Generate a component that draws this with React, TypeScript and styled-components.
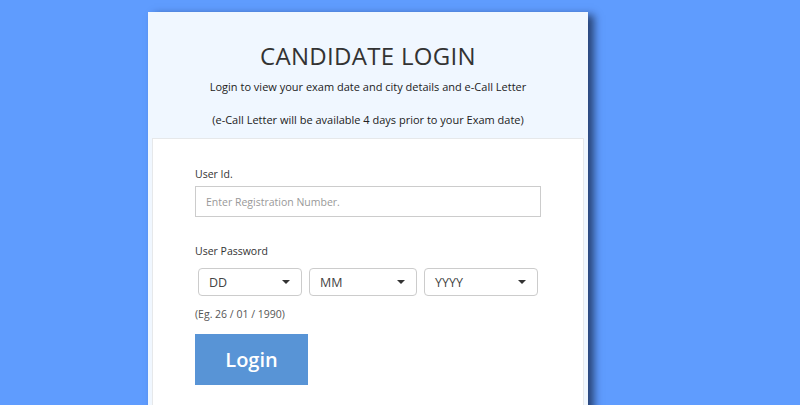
import styled, { createGlobalStyle } from "styled-components";

const GlobalStyle = createGlobalStyle`
  html, body {
    margin: 0;
    padding: 0;
    background: #5f9cfe;
    font-family: "Open Sans", "Liberation Sans", sans-serif;
  }
  * { box-sizing: border-box; }
`;

const Page = styled.div`
  width: 800px;
  height: 405px;
  overflow: hidden;
  padding: 12px 0 0 148px;
`;

const Card = styled.div`
  width: 440px;
  height: 420px;
  background: #f0f7ff;
  padding: 0 4px;
  box-shadow: 6px 3px 8px rgba(10, 20, 45, 0.65);
`;

const Header = styled.div`
  text-align: center;
  padding-top: 28px;
  height: 126px;
  color: #333;
`;

const Title = styled.h1`
  margin: 0 0 6px;
  font-size: 24px;
  font-weight: 400;
  line-height: 32px;
  letter-spacing: 0.3px;
`;

const Sub = styled.p`
  margin: 0 0 16px;
  font-size: 11px;
  line-height: 17px;
  font-weight: 500;
  color: #222;
`;

const Panel = styled.div`
  background: #fff;
  border: 1px solid #e6e8ea;
  border-bottom: none;
  height: 300px;
  padding: 27px 42px 0;
`;

const Label = styled.div`
  font-size: 10.5px;
  color: #333;
  line-height: 16px;
  margin-bottom: 4px;
`;

const Input = styled.input`
  display: block;
  width: 346px;
  height: 31px;
  border: 1px solid #ccc;
  padding: 0 10px;
  font-family: inherit;
  font-size: 10.5px;
  color: #333;
  margin-bottom: 26px;
  outline: none;
  &::placeholder { color: #999; }
`;

const SelectRow = styled.div`
  display: flex;
  gap: 7px;
  padding-left: 3px;
  margin-top: 9px;
`;

const Select = styled.div<{ w: number }>`
  width: ${({ w }) => w}px;
  height: 28px;
  border: 1px solid #ccc;
  border-radius: 4px;
  display: flex;
  align-items: center;
  justify-content: space-between;
  padding: 0 11px 0 10px;
  font-size: 12.5px;
  color: #444;
`;

const Caret = styled.span`
  width: 0;
  height: 0;
  border-left: 4px solid transparent;
  border-right: 4px solid transparent;
  border-top: 4px solid #333;
`;

const Hint = styled.div`
  font-size: 10.5px;
  color: #555;
  margin-top: 10px;
  line-height: 16px;
`;

const Button = styled.button`
  margin-top: 12px;
  width: 113px;
  height: 51px;
  border: none;
  background: #5894d6;
  color: #fff;
  font-family: inherit;
  font-size: 20px;
  font-weight: 600;
  cursor: pointer;
`;

export default function App() {
  return (
    <>
      <GlobalStyle />
      <Page>
        <Card>
          <Header>
            <Title>CANDIDATE LOGIN</Title>
            <Sub>Login to view your exam date and city details and e-Call Letter</Sub>
            <Sub>(e-Call Letter will be available 4 days prior to your Exam date)</Sub>
          </Header>
          <Panel>
            <Label>User Id.</Label>
            <Input placeholder="Enter Registration Number." />
            <Label>User Password</Label>
            <SelectRow>
              <Select w={104}>DD<Caret /></Select>
              <Select w={108}>MM<Caret /></Select>
              <Select w={114}>YYYY<Caret /></Select>
            </SelectRow>
            <Hint>(Eg. 26 / 01 / 1990)</Hint>
            <Button>Login</Button>
          </Panel>
        </Card>
      </Page>
    </>
  );
}
